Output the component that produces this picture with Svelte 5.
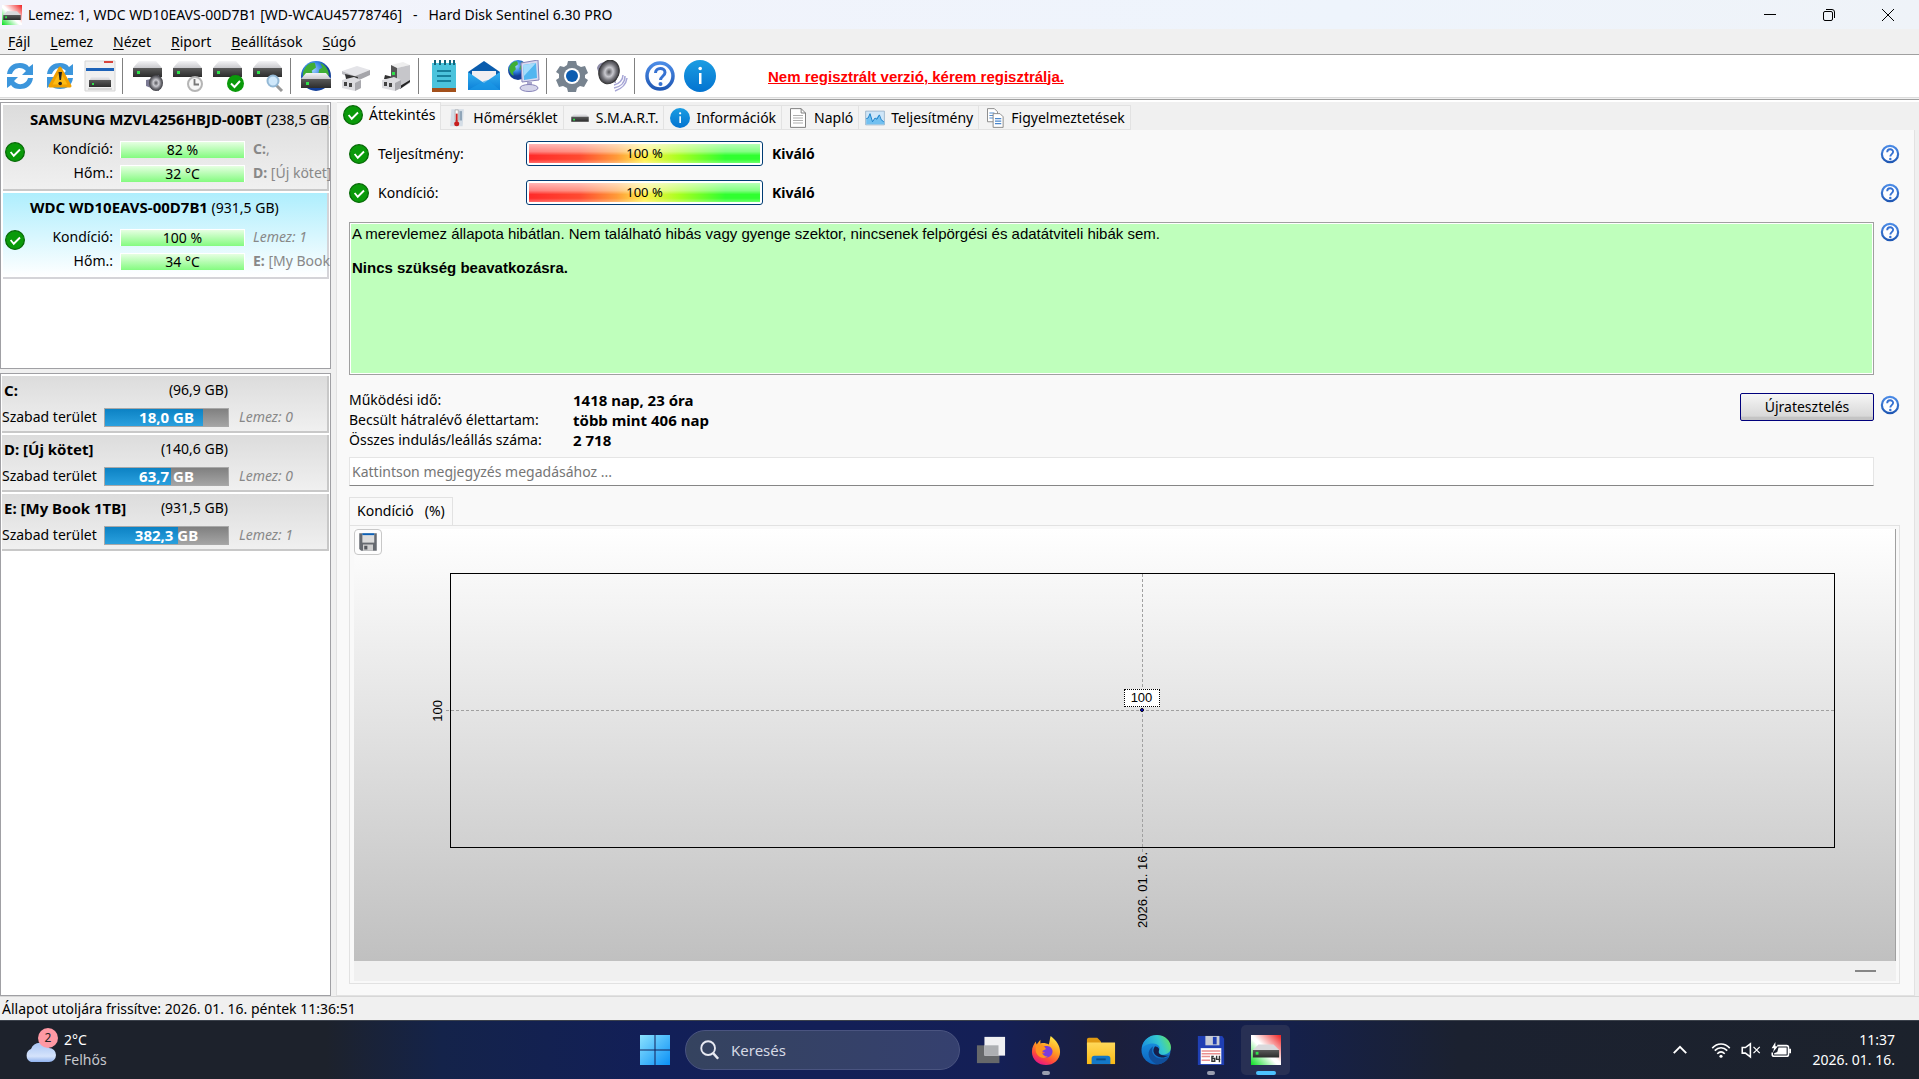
<script>
  const menu = ["Fájl", "Lemez", "Nézet", "Riport", "Beállítások", "Súgó"];

  const toolGroups = [
    ["refresh", "warn", "window"],
    ["diskSound", "diskClock", "diskOk", "diskFind"],
    ["globe", "usbDisk", "usbCase"],
    ["notes", "mail", "network"],
    ["gear", "speaker"],
    ["help", "info"]
  ];

  const disks = [
    { name: "SAMSUNG MZVL4256HBJD-00BT", size: "238,5 GB", health: 82, temp: 32, top: { bold: "C:", rest: "," }, bottom: { bold: "D:", rest: " [Új kötet]" } },
    { name: "WDC WD10EAVS-00D7B1", size: "931,5 GB", health: 100, temp: 34, top: { italic: "Lemez: 1" }, bottom: { bold: "E:", rest: " [My Book 1TB]" }, selected: true }
  ];

  const volumes = [
    { name: "C:", size: "96,9 GB", free: "18,0 GB", used: 80, disk: 0 },
    { name: "D: [Új kötet]", size: "140,6 GB", free: "63,7 GB", used: 54, disk: 0 },
    { name: "E: [My Book 1TB]", size: "931,5 GB", free: "382,3 GB", used: 59, disk: 1 }
  ];

  const tabs = [
    { icon: "check", label: "Áttekintés" },
    { icon: "thermo", label: "Hőmérséklet" },
    { icon: "drive", label: "S.M.A.R.T." },
    { icon: "info", label: "Információk" },
    { icon: "page", label: "Napló" },
    { icon: "graph", label: "Teljesítmény" },
    { icon: "pages", label: "Figyelmeztetések" }
  ];

  const gauges = [
    { label: "Teljesítmény:", value: 100, verdict: "Kiváló" },
    { label: "Kondíció:", value: 100, verdict: "Kiváló" }
  ];

  const stats = [
    ["Működési idő:", "1418 nap, 23 óra"],
    ["Becsült hátralévő élettartam:", "több mint 406 nap"],
    ["Összes indulás/leállás száma:", "2 718"]
  ];

  const apps = [
    { icon: "taskview" },
    { icon: "firefox", running: true },
    { icon: "explorer" },
    { icon: "edge" },
    { icon: "floppy", running: true },
    { icon: "sentinel", running: true, active: true }
  ];

  let current = $state("Áttekintés");
  let comment = $state("");
</script>

<!-- gradients shared by all the icons -->
<svg class="defs" width="0" height="0" aria-hidden="true">
  <defs>
    <linearGradient id="gTop" x2="0" y2="1"><stop stop-color="#f4f4f6" /><stop offset="1" stop-color="#c9c9cd" /></linearGradient>
    <linearGradient id="gBody" x2="0" y2="1"><stop stop-color="#5a5a5a" /><stop offset="1" stop-color="#2c2c2c" /></linearGradient>
    <linearGradient id="gInfo" x2="0" y2="1"><stop stop-color="#1b9de2" /><stop offset="1" stop-color="#0373d0" /></linearGradient>
    <linearGradient id="gHelp" x2="0" y2="1"><stop stop-color="#4b8be6" /><stop offset="1" stop-color="#2058b4" /></linearGradient>
    <radialGradient id="gSea" cx=".4" cy=".3"><stop stop-color="#9fd2ff" /><stop offset=".6" stop-color="#2f7fe0" /><stop offset="1" stop-color="#123e98" /></radialGradient>
    <radialGradient id="gCone" cx=".5" cy=".5"><stop stop-color="#55555a" /><stop offset=".4" stop-color="#c9c9cf" /><stop offset=".7" stop-color="#77777d" /><stop offset="1" stop-color="#3c3c42" /></radialGradient>
    <linearGradient id="gWin" x2="1" y2="1"><stop stop-color="#8be2ff" /><stop offset="1" stop-color="#0a90f6" /></linearGradient>
    <linearGradient id="gCloud" x2="0" y2="1"><stop stop-color="#a9c6f5" /><stop offset=".7" stop-color="#d5e3fb" /><stop offset="1" stop-color="#8fb2ee" /></linearGradient>
    <linearGradient id="gFox" x1=".8" y1="0" x2=".3" y2="1"><stop stop-color="#fff04a" /><stop offset=".45" stop-color="#ff9a22" /><stop offset=".75" stop-color="#ff4a3c" /><stop offset="1" stop-color="#e5138a" /></linearGradient>
    <linearGradient id="gFolder" x2="0" y2="1"><stop stop-color="#ffd95a" /><stop offset="1" stop-color="#fbb914" /></linearGradient>
    <linearGradient id="gEdgeA" x1="0" y1=".5" x2="1" y2=".2"><stop stop-color="#1a92df" /><stop offset=".6" stop-color="#35c8cf" /><stop offset="1" stop-color="#66e45a" /></linearGradient>
    <linearGradient id="gEdgeB" x2="0" y2="1"><stop stop-color="#1b9be8" /><stop offset="1" stop-color="#0c62bd" /></linearGradient>
    <linearGradient id="gRed" x1="1" y1="0" x2="0" y2="1"><stop stop-color="#f02020" /><stop offset=".48" stop-color="#fff" /><stop offset=".55" stop-color="#fff" /><stop offset="1" stop-color="#08e020" /></linearGradient>
    <linearGradient id="gEnv" x2="0" y2="1"><stop stop-color="#35b0f0" /><stop offset="1" stop-color="#0c80d8" /></linearGradient>
  </defs>
</svg>

{#snippet disk()}
  <path d="M7 1h17l6 7H1z" fill="url(#gTop)" />
  <path d="M1 8h29v9H1z" fill="url(#gBody)" />
  <path d="M5 11h3v3H5z" fill="#2ee04a" />
{/snippet}

{#snippet arrows()}
  <path d="M3 14C4 6 10 3 16 3c4 0 7 1 9 4l4-3v11H18l4-4c-4-5-12-4-14 3z" fill="#3c96dc" />
  <path d="M29 18c-1 8-7 11-13 11-4 0-7-1-9-4l-4 3V17h11l-4 4c4 5 12 4 14-3z" fill="#3c96dc" />
{/snippet}

{#snippet world(cx, cy, r)}
  <circle {cx} {cy} {r} fill="url(#gSea)" />
  <path transform="translate({cx - r} {cy - r}) scale({r / 14})" d="M4 6c3-4 7-5 9-4l1 4-4 3 1 4-4 4 1 5c-4-2-7-7-6-12zM18 2c4 1 8 6 8 11l-3 5-3-4-4-1 1-5 3-2z" fill="#3fae35" />
{/snippet}

{#snippet icon(name, size)}
  <svg class="icon" width={size} height={size} viewBox="0 0 32 32" aria-hidden="true">
    {#if name === "check"}
      <circle cx="16" cy="16" r="15" fill="#0a9a0a" stroke="#076907" stroke-width="2" />
      <path d="M9 16l5 6 10-10" fill="none" stroke="#fff" stroke-width="3" />
    {:else if name === "help"}
      <circle cx="16" cy="16" r="13" fill="#fdfdff" stroke="url(#gHelp)" stroke-width="3.500" />
      <path d="M11.500 13c0-6 9.500-6 9.500-.5 0 3.500-4.500 4-4.500 7.500" fill="none" stroke="#3571d2" stroke-width="3" />
      <circle cx="16.500" cy="24" r="2" fill="#3571d2" />
    {:else if name === "info"}
      <circle cx="16" cy="16" r="16" fill="url(#gInfo)" />
      <path d="M15 13h2.500v11H15z" fill="#fff" /><circle cx="16.200" cy="8.500" r="1.800" fill="#fff" />
    {:else if name === "refresh"}
      {@render arrows()}
    {:else if name === "warn"}
      {@render arrows()}
      <path d="M16 8l10 18H6z" fill="#fdbb13" stroke="#f0a000" stroke-width="3" stroke-linejoin="round" />
      <path d="M14.500 12h3.500l-1 8h-1.500z" fill="#222" /><circle cx="16.200" cy="23.500" r="1.800" fill="#222" />
    {:else if name === "window"}
      <path d="M1 1h30v30H1z" fill="#f0f0f0" stroke="#d5d5d5" />
      <path d="M20 1h9v2h-9z" fill="#d8443c" /><path d="M2 8h28v3H2z" fill="#1d62b8" />
      <path d="M8 16h16l3 5H5z" fill="url(#gTop)" /><path d="M5 20h22v7H5z" fill="url(#gBody)" /><path d="M8 23h2v2H8z" fill="#2ee04a" /><path d="M4 29h24" stroke="#bbb" />
    {:else if name === "diskSound"}
      {@render disk()}
      <path d="M14 20l5-1 8-4v16l-8-3-5-2z" fill="#7b7a93" /><ellipse cx="24" cy="23" rx="7" ry="8" fill="url(#gCone)" />
    {:else if name === "diskClock"}
      {@render disk()}
      <circle cx="23" cy="24" r="7" fill="#f6f6f6" stroke="#b5b5b5" stroke-width="2" /><path d="M22.500 19v5.500H27" fill="none" stroke="#777" stroke-width="1.800" />
    {:else if name === "diskOk"}
      {@render disk()}
      <circle cx="23.500" cy="23.500" r="8.500" fill="#0a9a0a" /><path d="M19 23.500l3.500 3.500 5.500-6" fill="none" stroke="#fff" stroke-width="2" />
    {:else if name === "diskFind"}
      {@render disk()}
      <path d="M24 25l6 6" stroke="#999" stroke-width="3" /><circle cx="21" cy="21" r="5.500" fill="#cfe8fb" stroke="#94b9d6" stroke-width="2" />
    {:else if name === "globe"}
      {@render world(16, 16, 15)}
      <path d="M6 13h20l5 6H1z" fill="url(#gTop)" /><path d="M1 19h30v9H1z" fill="url(#gBody)" /><path d="M6 22h3v3H6z" fill="#2ee04a" />
    {:else if name === "usbDisk"}
      <path d="M2 11l15-5 13 4-15 6z" fill="#e4e4e8" /><path d="M2 11l13 5v4L2 14z" fill="#bdbdc2" /><path d="M15 16l15-6v5l-13 6z" fill="#a5a5aa" />
      <path d="M5 14l13 3-1 5-11-3z" fill="#333" />
      <path d="M2 20l12-3 7 3v8l-6 3-13-3z" fill="#dcdce0" /><path d="M15 23l6-3v8l-6 3z" fill="#a9a9ae" /><path d="M4 22h3v4H4zM9 23h3v4H9z" fill="#444" />
    {:else if name === "usbCase"}
      <path d="M11 5l12-3 7 3-13 3z" fill="#eee" /><path d="M11 5l6 3v15h-6z" fill="#555" /><path d="M17 8l13-3v18l-10 6-3-3z" fill="#c6c6ca" /><path d="M12 12h3v3h-3z" fill="#2ee04a" />
      <path d="M30 22l-10 7v-3l10-6z" fill="#222" /><path d="M5 15l8 2v3l-9-1z" fill="#333" />
      <path d="M2 20l12-3 7 3v8l-6 3-13-3z" fill="#dcdce0" /><path d="M15 23l6-3v8l-6 3z" fill="#a9a9ae" /><path d="M4 22h3v4H4zM9 23h3v4H9z" fill="#444" />
    {:else if name === "notes"}
      <path d="M4 3h24v26H4z" fill="#4bc3dc" /><path d="M4 28h24v4H4z" fill="#a3501b" />
      <path d="M7 0v5M12 0v5M17 0v5M22 0v5M26 0v5" stroke="#12637a" stroke-width="2" /><path d="M9 11h14M9 16h14M9 21h14" stroke="#17809c" stroke-width="2" />
    {:else if name === "mail"}
      <path d="M0 12L16 1l16 11v10H0z" fill="#0a5cad" /><path d="M4 11h24v12H4z" fill="#f1eef2" />
      <path d="M0 12l16 11 16-11v18H0z" fill="url(#gEnv)" /><path d="M0 30l16-9 4-1 12 10z" fill="#1d9be8" opacity=".6" />
    {:else if name === "network"}
      {@render world(10, 10, 10)}
      <path d="M13 3l17-3 1 20-17 2z" fill="#d8d9ef" stroke="#8784b8" /><path d="M15 5l13-2 1 15-13 2z" fill="#52b6f0" /><path d="M15 5l13-2-12 13z" fill="#a4dcfb" />
      <path d="M19 22h5v4h-5z" fill="#aaa8cc" /><ellipse cx="21" cy="28" rx="9" ry="3.500" fill="#d5d5ea" stroke="#8784b8" />
    {:else if name === "gear"}
      <path d="M12 1h8l1 4 4 2 4-1 3 7-3 2v3l3 2-4 7-4-1-3 2-1 4h-8l-1-4-4-2-4 1-3-7 3-2v-4l-3-2 4-6 4 1 3-2z" fill="#77838f" />
      <circle cx="16" cy="16" r="8" fill="#fff" /><circle cx="16" cy="16" r="6" fill="#0b5cb0" />
    {:else if name === "speaker"}
      <path d="M1 8c1-5 7-7 15-7l4 22C12 21 2 15 1 8z" fill="#8b8aa6" /><ellipse cx="13" cy="12" rx="10" ry="12" transform="rotate(20 13 12)" fill="url(#gCone)" stroke="#333" />
      <path d="M27 15c0 5-4 9-9 10M29 16c0 7-5 11-11 12M31 18c-1 7-6 11-12 13" fill="none" stroke="#a7a6d6" stroke-width="1.500" />
    {:else if name === "thermo"}
      <path d="M7 2h20l-2 27H5z" fill="#d4dde6" /><path d="M20 5h4v15h-4z" fill="#8fa5b8" />
      <path d="M13 3h5v17h-5z" fill="#fff" stroke="#999" /><path d="M14 9h3v13h-3z" fill="#cf2222" /><circle cx="15.500" cy="25" r="4" fill="#c71e1e" />
    {:else if name === "drive"}
      <path d="M7 9h18l5 5H2z" fill="url(#gTop)" /><path d="M2 14h28v8H2z" fill="url(#gBody)" /><path d="M5 17h3v3H5z" fill="#2ee04a" />
    {:else if name === "page"}
      <path d="M4 1h17l7 7v23H4z" fill="#fff" stroke="#777" stroke-width="1.500" /><path d="M21 1v7h7" fill="none" stroke="#777" stroke-width="1.500" />
      <path d="M8 12h16M8 16h16M8 20h16M8 24h16" stroke="#aaa" stroke-width="1.500" />
    {:else if name === "graph"}
      <path d="M1 5h30v22H1z" fill="#cfe6f8" stroke="#7d9db8" /><path d="M2 26v-9l3-1 3-7 4 12 3-3 3-2 4-5 3 7 6 4v4z" fill="#72c0f0" />
      <path d="M2 17l3-1 3-7 4 13 4-6 3 2 4-7 3 8 4 3" fill="none" stroke="#1a7fc8" stroke-width="1.500" />
    {:else if name === "pages"}
      <path d="M4 1h11l5 5v16H4z" fill="#fff" stroke="#888" stroke-width="1.500" /><path d="M7 8h8M7 12h7M7 16h7" stroke="#4a86cc" stroke-width="1.500" />
      <path d="M13 9h11l5 5v17H13z" fill="#fff" stroke="#888" stroke-width="1.500" /><path d="M16 17h10M16 21h10M16 25h10" stroke="#4a86cc" stroke-width="2" />
    {:else if name === "save"}
      <path d="M2 2h28v28H5l-3-3z" fill="#666a70" /><path d="M7 2h19v15H7z" fill="#dcdcdc" /><path d="M7 2h19v3H7z" fill="#0b60b8" />
      <path d="M8 20h16v10H8z" fill="#cfcfcf" /><path d="M10 22h5v6h-5z" fill="#55585e" />
    {:else if name === "sentinel"}
      <path d="M0 0h32v32H0z" fill="url(#gRed)" />
      <path d="M8 10h16l6 6H2z" fill="#d9d9dc" /><path d="M2 16h28v8H2z" fill="url(#gBody)" /><path d="M5 18h3v3H5z" fill="#2ee04a" />
    {:else if name === "start"}
      <path d="M1 1h14.500v14.500H1zM16.500 1H31v14.500H16.500zM1 16.500h14.500V31H1zM16.500 16.500H31V31H16.500z" fill="url(#gWin)" />
    {:else if name === "search"}
      <circle cx="13" cy="13" r="11" fill="none" stroke="#e8eaf2" stroke-width="3" /><path d="M21 21l8 9" stroke="#e8eaf2" stroke-width="4" />
    {:else if name === "taskview"}
      <path d="M1 11h24v19H1z" fill="#66686a" /><path d="M9 2h22v20H9z" fill="#f0f0f2" /><path d="M9 11h15v11H9z" fill="#adafb2" />
    {:else if name === "firefox"}
      <path d="M21 1c6 5 10 10 10 17 0 8-7 14-15 14S1 26 1 18c0-5 2-8 4-11l1 3 4-5v4c4-1 6 0 9 1 1-3 1-6 2-9z" fill="url(#gFox)" />
      <path d="M10 14c2-3 12-4 13 3 0 5-4 7-7 7-4 0-6-3-5-5 1 1 3 1 4 0-2-1-4-2-5-5z" fill="#7a3cdc" /><path d="M5 11c3-2 6-1 9 1l2 3-4 2c-1 3 2 6 6 6-6 4-13-1-13-7z" fill="#ff9420" />
    {:else if name === "explorer"}
      <path d="M1 5c0-1 1-2 2-2h9l4 4v4H1z" fill="#e09a12" /><path d="M1 8h30v23H1z" fill="url(#gFolder)" /><path d="M6 31v-6c0-2 1-3 3-3h14c2 0 3 1 3 3v6z" fill="#1478c8" /><path d="M11 26h10" stroke="#0a4e8a" stroke-width="2" />
    {:else if name === "edge"}
      <circle cx="16" cy="16" r="15.500" fill="url(#gEdgeB)" />
      <path d="M1 14C2 5 9 0 17 0c9 0 15 7 15 13s-5 8-9 8-5-2-4-4c3-5-2-8-6-8-5 0-10 2-12 5z" fill="url(#gEdgeA)" />
      <path d="M13 12c-7 4-7 14 3 19 6 1 12-3 14-8-7 4-16 2-18-5 0-2 0-4 1-6z" fill="#114f9c" /><path d="M15 12c-4 5-1 11 7 12 3 0 6-1 9-3-1 1-2 1-4 1-5 0-9-2-8-5 1-2 0-4-4-5z" fill="#161f4c" />
    {:else if name === "floppy"}
      <path d="M2 1h26l2 3v28H2z" fill="#1f3fb4" /><path d="M10 1h15v10H10z" fill="#c9cdd6" /><path d="M18 2h4v8h-4z" fill="#1f3fb4" />
      <path d="M5 14h22v17H5z" fill="#fff" /><path d="M6 17h20M6 20h20M6 23h9M6 27h9" stroke="#e99090" stroke-width="1.500" /><path d="M19 23h-2v5h3v-3h-3M22 22v4h4M25 22v7" fill="none" stroke="#333" stroke-width="1.500" />
    {:else if name === "cloud"}
      <path d="M7 28a7 7 0 0 1 0-13A10 10 0 0 1 25 14a7 7 0 0 1 0 14z" fill="url(#gCloud)" />
    {:else if name === "chevron"}
      <path d="M6 21l10-10 10 10" fill="none" stroke="#fff" stroke-width="3" />
    {:else if name === "wifi"}
      <path d="M2 13c8-9 20-9 28 0M6 17c6-6 14-6 20 0M10 22c4-4 8-4 12 0" fill="none" stroke="#fff" stroke-width="2.500" /><circle cx="16" cy="26" r="2.500" fill="#fff" />
    {:else if name === "mute"}
      <path d="M2 12v9h5l8 6V6l-8 6z" fill="none" stroke="#fff" stroke-width="2.500" /><path d="M20 11l10 10M30 11L20 21" stroke="#fff" stroke-width="2" />
    {:else if name === "battery"}
      <path d="M10 9h15c2 0 3 1 3 3v11c0 2-1 3-3 3H5c-2 0-3-1-3-3v-3" fill="none" stroke="#fff" stroke-width="2.500" /><path d="M12 12h13v11H5v-2l5-2zM29 14h3v7h-3z" fill="#fff" /><path d="M7 3L1 13h4l-2 7 8-10H7z" fill="#fff" />
    {/if}
  </svg>
{/snippet}

<div class="screen">
  <header class="titlebar">
    {@render icon("sentinel", 20)}
    <h1>Lemez: 1, WDC WD10EAVS-00D7B1 [WD-WCAU45778746]&nbsp;&nbsp; -&nbsp;&nbsp; Hard Disk Sentinel 6.30 PRO</h1>
    <div class="winbtns">
      <button aria-label="Kis méret"><svg width="12" height="12"><path d="M0 5.500h12" stroke="#000" /></svg></button>
      <button aria-label="Előző méret"><svg width="12" height="12" fill="none" stroke="#000"><rect x=".5" y="2.500" width="9" height="9" rx="1.500" /><path d="M3 .5h6a2.500 2.500 0 0 1 2.500 2.500v6" /></svg></button>
      <button aria-label="Bezárás"><svg width="12" height="12"><path d="M0 0l12 12M12 0L0 12" stroke="#000" /></svg></button>
    </div>
  </header>

  <nav class="menu">
    {#each menu as item}
      <button><u>{item[0]}</u>{item.slice(1)}</button>
    {/each}
  </nav>

  <div class="toolbar">
    {#each toolGroups as group, i}
      {#if i > 0}<span class="sep"></span>{/if}
      {#each group as name}
        <button aria-label={name}>{@render icon(name, 32)}</button>
      {/each}
    {/each}
    <a href="#register">Nem regisztrált verzió, kérem regisztrálja.</a>
  </div>

  <main>
    <aside>
      <div class="list disks">
        {#each disks as d}
          <section class="disk" class:selected={d.selected}>
            <h2><b>{d.name}</b> ({d.size})</h2>
            <div class="state">{@render icon("check", 20)}</div>
            <span class="key">Kondíció:</span>
            <span class="meter">{d.health} %</span>
            <span class="where">{#if d.top.italic}<i>{d.top.italic}</i>{:else}<b>{d.top.bold}</b>{d.top.rest}{/if}</span>
            <span class="key">Hőm.:</span>
            <span class="meter">{d.temp} °C</span>
            <span class="where"><b>{d.bottom.bold}</b>{d.bottom.rest}</span>
          </section>
        {/each}
      </div>
      <div class="list volumes">
        {#each volumes as v}
          <section class="volume">
            <div class="vhead"><b>{v.name}</b><span>({v.size})</span></div>
            <div class="vrow">
              <span class="vkey">Szabad terület</span>
              <span class="free"><span class="used" style="width: {v.used}%"></span><b>{v.free}</b></span>
              <i>Lemez: {v.disk}</i>
            </div>
          </section>
        {/each}
      </div>
    </aside>

    <div class="content">
      <div class="tabs" role="tablist">
        {#each tabs as tab}
          <button role="tab" class:active={current === tab.label} aria-selected={current === tab.label} onclick={() => (current = tab.label)}>
            {@render icon(tab.icon, 20)}{tab.label}
          </button>
        {/each}
      </div>

      <div class="page">
        {#each gauges as g}
          <div class="gauge">
            {@render icon("check", 20)}
            <span class="glabel">{g.label}</span>
            <span class="gbar"><span style="width: {g.value}%">{g.value} %</span></span>
            <b>{g.verdict}</b>
            <button class="helpbtn" aria-label="Súgó">{@render icon("help", 20)}</button>
          </div>
        {/each}

        <div class="line">
          <div class="verdict">
            <p>A merevlemez állapota hibátlan. Nem található hibás vagy gyenge szektor, nincsenek felpörgési és adatátviteli hibák sem.</p>
            <p><b>Nincs szükség beavatkozásra.</b></p>
          </div>
          <button class="helpbtn" aria-label="Súgó">{@render icon("help", 20)}</button>
        </div>

        <div class="line info">
          <dl>
            {#each stats as [key, value]}
              <dt>{key}</dt>
              <dd>{value}</dd>
            {/each}
          </dl>
          <button class="retest">Újratesztelés</button>
          <button class="helpbtn" aria-label="Súgó">{@render icon("help", 20)}</button>
        </div>

        <input class="comment" type="text" aria-label="Megjegyzés" placeholder="Kattintson megjegyzés megadásához ..." bind:value={comment} />

        <div class="charttab">Kondíció&nbsp;&nbsp; (%)</div>
        <div class="chartframe">
          <div class="chart">
            <button class="save" aria-label="Mentés">{@render icon("save", 20)}</button>
            <div class="ylabel">100</div>
            <div class="plot">
              <span class="hline"></span>
              <span class="vline"></span>
              <span class="dot"></span>
              <span class="value">100</span>
            </div>
            <div class="xlabel">2026. 01. 16.</div>
          </div>
          <div class="slider"><span></span></div>
        </div>
      </div>
    </div>
  </main>

  <div class="status">Állapot utoljára frissítve: 2026. 01. 16. péntek 11:36:51</div>

  <footer class="taskbar">
    <button class="weather">
      <span class="cloud">{@render icon("cloud", 32)}<span class="badge">2</span></span>
      <span>2°C<br /><small>Felhős</small></span>
    </button>
    <div class="center">
      <button class="app" aria-label="Start">{@render icon("start", 32)}</button>
      <label class="search">{@render icon("search", 20)}<input type="text" placeholder="Keresés" aria-label="Keresés" /></label>
      {#each apps as app}
        <button class="app" class:running={app.running} class:active={app.active} aria-label={app.icon}>{@render icon(app.icon, 30)}</button>
      {/each}
    </div>
    <div class="tray">
      {@render icon("chevron", 20)}
      <span class="net">{@render icon("wifi", 20)}{@render icon("mute", 20)}{@render icon("battery", 20)}</span>
      <time>11:37<br />2026. 01. 16.</time>
    </div>
  </footer>
</div>

<style>
  :global(body) {
    margin: 0;
  }
  .screen {
    min-height: 100vh;
    display: flex;
    flex-direction: column;
    background: #f0f0f0;
    color: #000;
    font: 14px/20px "Noto Sans", "Open Sans", sans-serif;
  }
  .screen :global(*) {
    box-sizing: border-box;
  }
  .defs {
    position: absolute;
  }
  button {
    font: inherit;
    color: inherit;
    padding: 0;
    border: 0;
    background: none;
  }
  .icon {
    display: block;
    flex: none;
  }
  h1, h2, p, dl, dd {
    margin: 0;
    font-size: inherit;
    font-weight: normal;
  }

  .titlebar {
    display: flex;
    align-items: center;
    gap: 6px;
    height: 29px;
    padding: 0 2px;
    background: linear-gradient(90deg, #f3f3fb, #eef4fc 70%, #eff3f8);
  }
  .winbtns {
    display: flex;
    margin-left: auto;
  }
  .winbtns button {
    width: 59px;
    height: 29px;
    display: grid;
    place-items: center;
  }
  .menu {
    display: flex;
    gap: 20px;
    height: 26px;
    padding: 0 8px;
    border-bottom: 1px solid #a0a0a0;
  }
  .menu u {
    text-underline-offset: 2px;
  }
  .toolbar {
    display: flex;
    align-items: center;
    height: 47px;
    padding-bottom: 5px;
    background: linear-gradient(#fff 42px, #dcdcdc 42px 43px, #f0f0f0 43px 44px, #a0a0a0 44px 45px, #fff 45px);
  }
  .toolbar button {
    width: 40px;
    height: 40px;
    display: grid;
    place-items: center;
  }
  .sep {
    width: 1px;
    height: 36px;
    margin: 0 5px 0 2px;
    background: #808080;
  }
  .toolbar a {
    margin-left: 48px;
    color: #f00;
    font: bold 15px "Liberation Sans", sans-serif;
  }

  main {
    flex: 1;
    display: flex;
  }
  aside {
    width: 331px;
    flex: none;
    display: flex;
    flex-direction: column;
    gap: 4px;
  }
  .list {
    background: #fff;
    border: 1px solid #a0a0a4;
    padding: 2px 1px 0 2px;
    overflow: hidden;
  }
  .disks {
    height: 267px;
  }
  .volumes {
    flex: 1;
    padding-left: 1px;
  }
  .disk {
    display: grid;
    grid-template-columns: 22px 87px 125px minmax(0, 1fr);
    grid-template-rows: 32px 24px 24px;
    column-gap: 4px;
    align-items: center;
    height: 86px;
    margin-bottom: 2px;
    padding-bottom: 4px;
    border: solid #c8c8c8;
    border-width: 0 2px 2px 0;
    background: linear-gradient(#dcdcdc, #f0f0f0);
    white-space: nowrap;
  }
  .disk.selected {
    background: linear-gradient(#aeeefd, #fff);
    border-color: #d4d4d8;
  }
  .disk h2 {
    grid-column: 1 / 5;
    padding: 0 0 4px 27px;
  }
  .disk h2 b,
  .vhead b,
  .free b,
  .info dd {
    font-size: 15px;
  }
  .state {
    grid-row: 2 / 4;
    margin-left: 2px;
    align-self: start;
    padding-top: 5px;
  }
  .key {
    text-align: right;
    padding-right: 3px;
  }
  .meter {
    height: 17px;
    line-height: 16px;
    text-align: center;
    border: 1px solid #fff;
    border-bottom: 0;
    background: linear-gradient(#e6ffe2, #84fb80);
  }
  .where {
    padding-left: 4px;
    color: #888;
  }
  .volume {
    height: 57px;
    margin-bottom: 2px;
    border: solid #c8c8c8;
    border-width: 0 2px 2px 0;
    background: linear-gradient(#dcdcdc, #f0f0f0);
    white-space: nowrap;
  }
  .vhead {
    display: flex;
    justify-content: space-between;
    width: 226px;
    height: 31px;
    padding-top: 4px;
    padding-left: 2px;
  }
  .vrow {
    display: flex;
    align-items: center;
  }
  .vkey {
    width: 102px;
  }
  .free {
    position: relative;
    width: 125px;
    height: 19px;
    border: 1px solid #a8a8a8;
    background: linear-gradient(#808080, #a4a4a4);
    color: #fff;
    text-align: center;
    line-height: 16px;
  }
  .used {
    position: absolute;
    inset: 0 auto 0 0;
    background: linear-gradient(#0c82c4, #2aa0de);
  }
  .free b {
    position: relative;
  }
  .vrow i {
    margin-left: 10px;
    color: #888;
  }

  .content {
    flex: 1;
    min-width: 0;
    padding: 0 4px 0 5px;
    display: flex;
    flex-direction: column;
  }
  .tabs {
    display: flex;
    align-items: flex-end;
    height: 28px;
    padding-left: 1px;
  }
  .tabs button {
    display: flex;
    align-items: center;
    gap: 6px;
    height: 25px;
    padding: 0 5px 0 6px;
    border: 1px solid #e2e2e2;
    border-left: 0;
    background: #f3f3f3;
    white-space: nowrap;
  }
  .tabs .active {
    height: 28px;
    background: #f9f9f9;
    border-bottom: 0;
    padding-bottom: 3px;
  }
  .page {
    flex: 1;
    display: flex;
    flex-direction: column;
    border: 1px solid #e2e2e2;
    border-top: 0;
    background: #f9f9f9;
    padding: 4px 14px 11px 12px;
  }
  .gauge {
    display: flex;
    align-items: center;
    height: 39px;
  }
  .glabel {
    width: 148px;
    margin-left: 9px;
  }
  .gbar {
    width: 237px;
    height: 25px;
    padding: 2px;
    border: 1px solid #003c74;
    border-radius: 3px;
    background: #fff;
    font-size: 13px;
    text-align: center;
  }
  .gbar span {
    display: block;
    background:
      linear-gradient(rgba(255, 255, 255, 0.65), rgba(255, 255, 255, 0.4) 40%, transparent 60%, transparent 80%, rgba(255, 255, 255, 0.3)),
      linear-gradient(90deg, #ff2a2a, #ff4a30 22%, #ff9a38 38%, #fff04a 50%, #a8ff20 65%, #30ff30 85%);
    height: 19px;
    line-height: 19px;
  }
  .gauge b {
    margin-left: 9px;
  }
  .helpbtn {
    flex: none;
    margin-left: auto;
  }
  .line {
    display: flex;
    align-items: flex-start;
    gap: 6px;
    margin-top: 10px;
  }
  .verdict {
    flex: 1;
    height: 153px;
    border: 1px solid #a0a0a0;
    padding: 2px;
    background: #bfffbc;
    box-shadow: inset 0 0 0 1px #fff;
    font: 15px/17px "Liberation Sans", sans-serif;
  }
  .verdict p + p {
    margin-top: 17px;
  }
  .info {
    margin-top: 15px;
  }
  .info dl {
    display: grid;
    grid-template-columns: 224px 1fr;
    flex: 1;
  }
  .info dd {
    font-weight: bold;
  }
  .retest {
    width: 134px;
    height: 28px;
    margin-top: 3px;
    border: 1px solid #00007c;
    border-radius: 2px;
    background: linear-gradient(#f6f6f6, #d8d8d8 85%, #c4c4c4 90%);
  }
  .info .helpbtn {
    margin-top: 5px;
  }
  .comment {
    height: 29px;
    margin: 7px 26px 11px 0;
    padding: 0 2px;
    border: 1px solid #e5e5e5;
    border-bottom-color: #868686;
    border-radius: 0;
    background: #fff;
    font: inherit;
  }
  .comment::placeholder {
    color: #767676;
  }
  .charttab {
    align-self: flex-start;
    height: 28px;
    padding: 3px 7px;
    border: 1px solid #e2e2e2;
    border-bottom: 0;
  }
  .chartframe {
    flex: 1;
    display: flex;
    flex-direction: column;
    border: 1px solid #e2e2e2;
    padding: 3px 3px 2px 4px;
  }
  .chart {
    flex: 1;
    display: grid;
    grid-template: 44px 1fr 113px / 96px 1fr 60px;
    background: linear-gradient(#fff, #c0c0c0);
    border-right: 1px solid #a0a0a0;
  }
  .save {
    width: 28px;
    height: 26px;
    display: grid;
    place-items: center;
    border: 1px solid #c8c8c8;
    border-radius: 4px;
    background: #fdfdfd;
  }
  .ylabel,
  .xlabel,
  .value {
    font: 13px/16px "Liberation Sans", sans-serif;
  }
  .ylabel,
  .xlabel {
    writing-mode: vertical-rl;
    transform: rotate(180deg);
  }
  .ylabel {
    grid-area: 2 / 1;
    place-self: center end;
    margin-right: 4px;
  }
  .plot {
    grid-area: 2 / 2;
    position: relative;
    border: 1px solid #000;
  }
  .hline {
    position: absolute;
    inset: calc(50% - 1px) 0 auto -5px;
    border-top: 1px dashed #a0a0a0;
  }
  .vline {
    position: absolute;
    inset: 0 auto -5px calc(50% - 1px);
    border-left: 1px dashed #a0a0a0;
  }
  .dot {
    position: absolute;
    top: calc(50% - 1px);
    left: calc(50% - 1px);
    width: 4px;
    height: 4px;
    margin: -2px;
    border: 1px solid #000;
    border-radius: 50%;
    background: #00f;
  }
  .value {
    position: absolute;
    bottom: 50%;
    left: 50%;
    width: 36px;
    margin: 0 0 4px -19px;
    border: 1px dotted #000;
    background: #fff;
    text-align: center;
  }
  .xlabel {
    grid-area: 3 / 2;
    place-self: start center;
    margin-top: 4px;
  }
  .slider {
    height: 20px;
    display: flex;
    align-items: center;
    justify-content: flex-end;
    padding-right: 20px;
    background: #f0f0f0;
  }
  .slider span {
    width: 21px;
    height: 2px;
    background: #868686;
  }

  .status {
    height: 24px;
    padding: 2px;
    border-top: 1px solid #d7d7d7;
  }

  .taskbar {
    display: grid;
    grid-template-columns: 1fr auto 1fr;
    align-items: center;
    height: 59px;
    border-top: 1px solid #3c424c;
    color: #fff;
    background: linear-gradient(90deg, #1d222c 17%, #14234a 23%, #121f58 34%, #141f56 52%, #1b1f3c 58%, #14204e 66%, #1b2130 76%, #1c222c);
  }
  .weather {
    display: flex;
    gap: 8px;
    align-items: center;
    padding-left: 24px;
    text-align: left;
  }
  .weather small {
    font-size: 14px;
    color: #c6c8cc;
  }
  .cloud {
    position: relative;
  }
  .badge {
    position: absolute;
    top: -6px;
    left: 14px;
    width: 20px;
    height: 20px;
    border-radius: 50%;
    background: #ff99a4;
    color: #222;
    text-align: center;
    font-size: 12px;
  }
  .center {
    display: flex;
    align-items: center;
    padding-left: 1px;
  }
  .app {
    position: relative;
    width: 55px;
    height: 50px;
    display: grid;
    place-items: center;
  }
  .app.active {
    width: 49px;
    margin: 0 3px;
    border-radius: 5px;
    background: #283054;
  }
  .app.running::after {
    content: "";
    position: absolute;
    bottom: 0;
    width: 8px;
    height: 4px;
    border-radius: 2px;
    background: #9a9eb0;
  }
  .app.active::after {
    width: 20px;
    background: #4cc2ff;
  }
  .search {
    display: flex;
    align-items: center;
    gap: 11px;
    width: 275px;
    height: 40px;
    margin: 0 3px;
    padding: 0 14px;
    border: 1px solid #4a5480;
    border-radius: 20px;
    background: linear-gradient(90deg, #35435f, #35406f);
  }
  .search input {
    min-width: 0;
    border: 0;
    padding: 0;
    background: none;
    color: #fff;
    font: inherit;
    font-size: 15px;
  }
  .search input::placeholder {
    color: #d6d9e4;
  }
  .tray {
    display: flex;
    align-items: center;
    justify-content: flex-end;
    gap: 21px;
    padding-right: 24px;
  }
  .net {
    display: flex;
    gap: 10px;
  }
  time {
    text-align: right;
  }
</style>
